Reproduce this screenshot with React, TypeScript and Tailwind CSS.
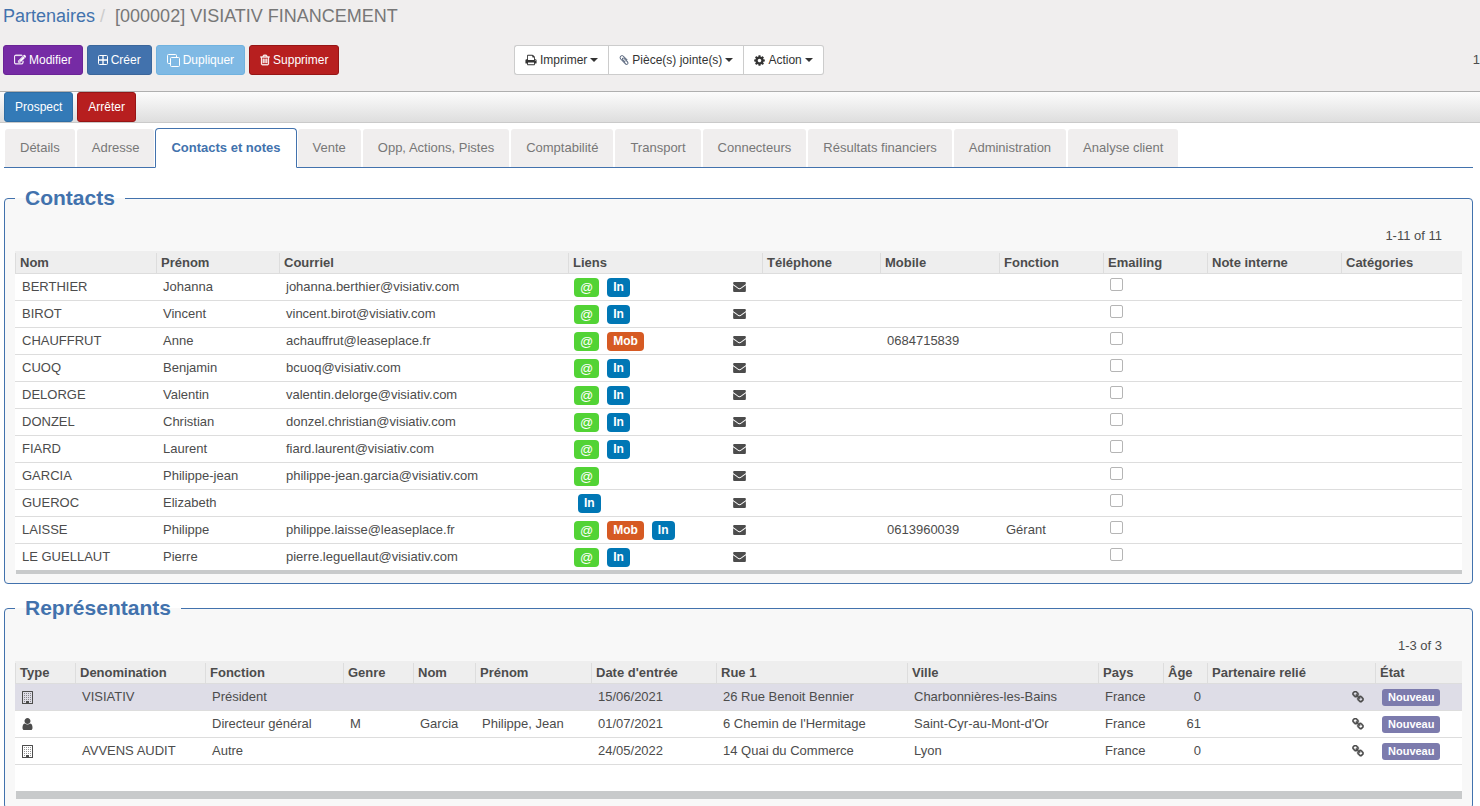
import { useState } from 'react';
import type { ReactNode } from 'react';

interface Contact {
  nom: string;
  prenom: string;
  courriel?: string;
  liens: string[];
  mobile?: string;
  fonction?: string;
}

interface Representant {
  societe: boolean;
  denomination?: string;
  fonction: string;
  genre?: string;
  nom?: string;
  prenom?: string;
  date: string;
  rue: string;
  ville: string;
  pays: string;
  age: number;
}

interface Column {
  label: string;
  width: number;
}

const tabs = [
  'Détails', 'Adresse', 'Contacts et notes', 'Vente', 'Opp, Actions, Pistes', 'Comptabilité',
  'Transport', 'Connecteurs', 'Résultats financiers', 'Administration', 'Analyse client',
];

const contactColumns: Column[] = [
  { label: 'Nom', width: 141 },
  { label: 'Prénom', width: 123 },
  { label: 'Courriel', width: 289 },
  { label: 'Liens', width: 194 },
  { label: 'Téléphone', width: 118 },
  { label: 'Mobile', width: 119 },
  { label: 'Fonction', width: 104 },
  { label: 'Emailing', width: 104 },
  { label: 'Note interne', width: 134 },
  { label: 'Catégories', width: 121 },
];

const contacts: Contact[] = [
  { nom: 'BERTHIER', prenom: 'Johanna', courriel: 'johanna.berthier@visiativ.com', liens: ['@', 'In'] },
  { nom: 'BIROT', prenom: 'Vincent', courriel: 'vincent.birot@visiativ.com', liens: ['@', 'In'] },
  { nom: 'CHAUFFRUT', prenom: 'Anne', courriel: 'achauffrut@leaseplace.fr', liens: ['@', 'Mob'], mobile: '0684715839' },
  { nom: 'CUOQ', prenom: 'Benjamin', courriel: 'bcuoq@visiativ.com', liens: ['@', 'In'] },
  { nom: 'DELORGE', prenom: 'Valentin', courriel: 'valentin.delorge@visiativ.com', liens: ['@', 'In'] },
  { nom: 'DONZEL', prenom: 'Christian', courriel: 'donzel.christian@visiativ.com', liens: ['@', 'In'] },
  { nom: 'FIARD', prenom: 'Laurent', courriel: 'fiard.laurent@visiativ.com', liens: ['@', 'In'] },
  { nom: 'GARCIA', prenom: 'Philippe-jean', courriel: 'philippe-jean.garcia@visiativ.com', liens: ['@'] },
  { nom: 'GUEROC', prenom: 'Elizabeth', liens: ['In'] },
  { nom: 'LAISSE', prenom: 'Philippe', courriel: 'philippe.laisse@leaseplace.fr', liens: ['@', 'Mob', 'In'], mobile: '0613960039', fonction: 'Gérant' },
  { nom: 'LE GUELLAUT', prenom: 'Pierre', courriel: 'pierre.leguellaut@visiativ.com', liens: ['@', 'In'] },
];

const representantColumns: Column[] = [
  { label: 'Type', width: 60 },
  { label: 'Denomination', width: 130 },
  { label: 'Fonction', width: 138 },
  { label: 'Genre', width: 70 },
  { label: 'Nom', width: 62 },
  { label: 'Prénom', width: 116 },
  { label: "Date d'entrée", width: 125 },
  { label: 'Rue 1', width: 191 },
  { label: 'Ville', width: 191 },
  { label: 'Pays', width: 65 },
  { label: 'Âge', width: 44 },
  { label: 'Partenaire relié', width: 168 },
  { label: 'État', width: 87 },
];

const representants: Representant[] = [
  { societe: true, denomination: 'VISIATIV', fonction: 'Président', date: '15/06/2021', rue: '26 Rue Benoit Bennier', ville: 'Charbonnières-les-Bains', pays: 'France', age: 0 },
  { societe: false, fonction: 'Directeur général', genre: 'M', nom: 'Garcia', prenom: 'Philippe, Jean', date: '01/07/2021', rue: "6 Chemin de l'Hermitage", ville: "Saint-Cyr-au-Mont-d'Or", pays: 'France', age: 61 },
  { societe: true, denomination: 'AVVENS AUDIT', fonction: 'Autre', date: '24/05/2022', rue: '14 Quai du Commerce', ville: 'Lyon', pays: 'France', age: 0 },
];

const icons = {
  edit: 'M888 1184l116-116-152-152-116 116v56h96v96h56zm440-720q-16-16-33 1l-350 350q-17 17-1 33t33-1l350-350q17-17 1-33zm80 594v190q0 119-84.500 203.500t-203.500 84.500h-832q-119 0-203.500-84.500t-84.500-203.500v-832q0-119 84.500-203.500t203.500-84.500h832q63 0 117 25 15 7 18 23 3 17-9 29l-49 49q-14 14-32 8-23-6-45-6h-832q-66 0-113 47t-47 113v832q0 66 47 113t113 47h832q66 0 113-47t47-113v-126q0-13 9-22l64-64q15-15 35-7t20 29zm-96-738l288 288-672 672h-288v-288zm444 132l-92 92-288-288 92-92q28-28 68-28t68 28l152 152q28 28 28 68t-28 68z',
  trash: 'M704 736v576q0 14-9 23t-23 9h-64q-14 0-23-9t-9-23v-576q0-14 9-23t23-9h64q14 0 23 9t9 23zm256 0v576q0 14-9 23t-23 9h-64q-14 0-23-9t-9-23v-576q0-14 9-23t23-9h64q14 0 23 9t9 23zm256 0v576q0 14-9 23t-23 9h-64q-14 0-23-9t-9-23v-576q0-14 9-23t23-9h64q14 0 23 9t9 23zm128 724v-948h-896v948q0 22 7 40.500t14.500 27 10.500 8.500h832q3 0 10.500-8.500t14.500-27 7-40.500zm-672-1076h448l-48-117q-7-9-17-11h-317q-10 2-17 11zm928 32v64q0 14-9 23t-23 9h-96v948q0 83-47 143.500t-113 60.500h-832q-66 0-113-58.500t-47-141.500v-952h-96q-14 0-23-9t-9-23v-64q0-14 9-23t23-9h309l70-167q15-37 54-63t79-26h320q40 0 79 26t54 63l70 167h309q14 0 23 9t9 23z',
  print: 'M448 1536h896v-256h-896v256zm0-640h896v-384h-160q-40 0-68-28t-28-68v-160h-640v640zm1152 64q0-26-19-45t-45-19-45 19-19 45 19 45 45 19 45-19 19-45zm128 0v416q0 13-9.500 22.500t-22.500 9.500h-224v160q0 40-28 68t-68 28h-960q-40 0-68-28t-28-68v-160h-224q-13 0-22.500-9.500t-9.500-22.500v-416q0-79 56.500-135.500t135.500-56.500h64v-544q0-40 28-68t68-28h672q40 0 88 20t76 48l152 152q28 28 48 76t20 88v256h64q79 0 135.500 56.500t56.500 135.500z',
  clip: 'M1596 1385q0 117-79 196t-196 79q-135 0-235-100l-777-776q-113-115-113-271 0-159 110-270t269-111q158 0 273 113l605 606q10 10 10 22 0 16-30.500 46.500t-46.500 30.500q-13 0-23-10l-606-607q-79-77-181-77-106 0-179 75t-73 181q0 105 76 181l776 777q63 63 145 63 64 0 106-42t42-106q0-82-63-145l-581-581q-26-24-60-24-29 0-48 19t-19 48q0 32 25 59l410 410q10 10 10 22 0 16-31 47t-47 31q-12 0-22-10l-410-410q-63-61-63-149 0-82 57-139t139-57q88 0 149 63l581 581q100 98 100 235z',
  cog: 'M1152 896q0-106-75-181t-181-75-181 75-75 181 75 181 181 75 181-75 75-181zm512-109v222q0 12-8 23t-20 13l-185 28q-19 54-39 91 35 50 107 138 10 12 10 25t-9 23q-27 37-99 108t-94 71q-12 0-26-9l-138-108q-44 23-91 38-16 136-29 186-7 28-36 28h-222q-14 0-24.500-8.500t-11.500-21.500l-28-184q-49-16-90-37l-141 107q-10 9-25 9-14 0-25-11-126-114-165-168-7-10-7-23 0-12 8-23 15-21 51-66.500t54-70.500q-27-50-41-99l-183-27q-13-2-21-12.500t-8-23.500v-222q0-12 8-23t19-13l186-28q14-46 39-92-40-57-107-138-10-12-10-24 0-10 9-23 26-36 98.500-107.500t94.500-71.500q13 0 26 10l138 107q44-23 91-38 16-136 29-186 7-28 36-28h222q14 0 24.500 8.500t11.500 21.500l28 184q49 16 90 37l142-107q9-9 24-9 13 0 25 10 129 119 165 170 7 8 7 22 0 12-8 23-15 21-51 66.500t-54 70.500q26 50 41 98l183 28q13 2 21 12.500t8 23.500z',
  envelope: 'M1792 710v794q0 66-47 113t-113 47h-1472q-66 0-113-47t-47-113v-794q44 49 101 87 362 246 497 345 57 42 92.500 65.500t94.500 48 110 24.500h2q51 0 110-24.500t94.500-48 92.500-65.500q170-123 498-345 57-39 100-87zm0-294q0 79-49 151t-122 123q-376 261-468 325-10 7-42.500 31t-54 38.500-52 32.500-57.500 27-50 9h-2q-23 0-50-9t-57.500-27-52-32.500-54-38.500-42.500-31q-91-64-262-182.500t-205-142.500q-62-42-117-115.500t-55-136.500q0-78 41.500-130t118.500-52h1472q65 0 112.500 47t47.500 113z',
  user: 'M1536 1399q0 109-62.500 187t-150.500 78h-854q-88 0-150.500-78t-62.500-187q0-85 8.500-160.500t31.500-152 58.500-131 94-89 134.500-34.500q131 128 313 128t313-128q76 0 134.500 34.500t94 89 58.500 131 31.500 152 8.500 160.500zm-256-887q0 159-112.500 271.500t-271.500 112.500-271.500-112.500-112.500-271.500 112.500-271.500 271.500-112.500 271.500 112.500 112.500 271.500z',
  link: 'M1520 1216q0-40-28-68l-208-208q-28-28-68-28-42 0-72 32 3 3 19 18.500t21.500 21.500 15 19 13 25.500 3.500 27.500q0 40-28 68t-68 28q-15 0-27.500-3.500t-25.500-13-19-15-21.500-21.500-18.500-19q-33 31-33 73 0 40 28 68l206 207q27 27 68 27 40 0 68-26l147-146q28-28 28-67zm-703-705q0-40-28-68l-206-207q-28-28-68-28-39 0-68 27l-147 146q-28 28-28 67 0 40 28 68l208 208q27 27 68 27 42 0 72-31-3-3-19-18.500t-21.500-21.500-15-19-13-25.500-3.500-27.500q0-40 28-68t68-28q15 0 27.500 3.500t25.500 13 19 15 21.500 21.500 18.500 19q33-31 33-73zm895 705q0 120-85 203l-147 146q-83 83-203 83-121 0-204-85l-206-207q-83-83-83-203 0-123 88-209l-88-88q-86 88-208 88-120 0-204-84l-208-208q-84-84-84-204t85-203l147-146q83-83 203-83 121 0 204 85l206 207q83 83 83 203 0 123-88 209l88 88q86-88 208-88 120 0 204 84l208 208q84 84 84 204z',
};

interface IconProps {
  name: keyof typeof icons;
  className: string;
  box?: string;
  stroke?: number;
}

function Icon({ name, className, box = '0 0 1792 1792', stroke = 0 }: IconProps) {
  return (
    <svg viewBox={box} className={className} fill="currentColor" stroke="currentColor" strokeWidth={stroke} aria-hidden="true">
      <path d={icons[name]} />
    </svg>
  );
}

function PlusSquareIcon() {
  return (
    <svg viewBox="0 0 10 10" className="size-[10px]" fill="none" stroke="currentColor" aria-hidden="true">
      <rect x="0.5" y="0.5" width="9" height="9" rx="1" />
      <path d="M5 1v8M1 5h8" strokeWidth="1.3" />
    </svg>
  );
}

function CloneIcon() {
  return (
    <svg viewBox="0 0 13 13" className="size-[13px]" fill="none" stroke="currentColor" aria-hidden="true">
      <rect x="3.5" y="3.5" width="9" height="9" rx="1" />
      <path d="M3 9.500H1.500a1 1 0 0 1-1-1v-7a1 1 0 0 1 1-1h7a1 1 0 0 1 1 1V3" />
    </svg>
  );
}

function BuildingIcon() {
  return (
    <svg viewBox="0 0 11 13" className="h-[13px] w-[11px]" fill="currentColor" aria-hidden="true">
      <path fillRule="evenodd" d="M0.500 0h10q.5 0 .5.500v12q0 .5-.5.500h-10q-.5 0-.5-.500v-12q0-.5.500-.500zM1 1v11h3v-2h3v2h3V1z" />
      {[2, 4, 6, 8].map(y => [2, 4, 6, 8].map(x => (
        <rect key={`${x}-${y}`} x={x} y={y} width="1" height="1" opacity="0.6" />
      )))}
      <path d="M2 10h1v1H2zM8 10h1v1H8z" opacity="0.6" />
    </svg>
  );
}

function Caret() {
  return <span className="border-x-4 border-t-4 border-x-transparent border-t-current" />;
}

function Button({ className, children }: { className: string; children: ReactNode }) {
  return (
    <button type="button" className={`flex h-[30px] items-center gap-[3px] rounded-[3px] border px-[10px] text-xs text-white ${className}`}>
      {children}
    </button>
  );
}

function LinkBadge({ label }: { label: string }) {
  if (label === '@') {
    return <a href="#" className="mr-1 rounded bg-[#52d335] px-[6px] text-[13px] leading-[19px] text-white">@</a>;
  }
  return (
    <a href="#" className={`mx-1 rounded px-[6px] text-xs leading-[19px] font-bold text-white ${label === 'In' ? 'bg-[#0077b5]' : 'bg-[#d65a23]'}`}>
      {label}
    </a>
  );
}

function ListTable({ columns, barClass, children }: { columns: Column[]; barClass: string; children: ReactNode }) {
  return (
    <>
      <table className="w-full table-fixed border-separate border-spacing-0 bg-white">
        <colgroup>
          {columns.map(c => <col key={c.label} style={{ width: c.width }} />)}
        </colgroup>
        <thead>
          <tr className="h-[23px] bg-[#eee]">
            {columns.map(c => (
              <th key={c.label} className="border-b border-[#ddd] p-0 text-left font-bold whitespace-nowrap">
                <div className="mt-[2px] border-l border-[#ddd] pl-1 leading-5">{c.label}</div>
              </th>
            ))}
          </tr>
        </thead>
        <tbody>{children}</tbody>
      </table>
      <div className={`ml-px bg-[#c8cacb] ${barClass}`} />
    </>
  );
}

function Section({ title, pager, children }: { title: string; pager: string; children: ReactNode }) {
  return (
    <fieldset className="min-w-0 rounded border border-[#4272ad] bg-[#f8f8f8] px-[10px] pb-[9px]">
      <legend className="px-[10px] text-[21px] leading-[30px] font-bold text-[#4272ad]">{title}</legend>
      <div className="pt-[14px] pr-5 pb-[6px] text-right leading-[18px]">{pager}</div>
      {children}
    </fieldset>
  );
}

function App() {
  const [activeTab, setActiveTab] = useState('Contacts et notes');
  const [emailing, setEmailing] = useState<string[]>([]);

  const toggleEmailing = (nom: string) => {
    setEmailing(emailing.includes(nom) ? emailing.filter(n => n !== nom) : [...emailing, nom]);
  };

  return (
    <div className="h-screen overflow-hidden bg-white font-['Liberation_Sans',Arial,sans-serif] text-[13px] leading-[18px] text-[#4c4c4c]">
      <header className="border-b border-[#afafaf] bg-[#f0eeee] pt-[3px] pb-4 pl-[3px]">
        <h1 className="flex text-lg leading-[26px] text-[#777]">
          <a href="#" className="text-[#4272ad]">Partenaires</a>
          <span className="mr-[10px] ml-[5px] text-[#ccc]">/</span>
          <span>[000002] VISIATIV FINANCEMENT</span>
        </h1>

        <div className="mt-4 grid grid-cols-[511px_1fr_auto] items-center">
          <div className="flex gap-1">
            <Button className="border-[#6a2496] bg-[#762ba5]">
              <Icon name="edit" className="size-3" stroke={50} />Modifier
            </Button>
            <Button className="border-[#3b669b] bg-[#4272ad]">
              <PlusSquareIcon />Créer
            </Button>
            <Button className="border-[#70b2df] bg-[#7fb9e4]">
              <CloneIcon />Dupliquer
            </Button>
            <Button className="border-[#961515] bg-[#b71f1f]">
              <Icon name="trash" className="h-3 w-[10px]" box="150 0 1492 1792" stroke={50} />Supprimer
            </Button>
          </div>

          <div className="flex text-xs text-[#333]">
            <button type="button" className="flex h-[30px] items-center gap-[3px] rounded-l-[3px] border border-r-0 border-[#ccc] bg-white px-[10px]">
              <Icon name="print" className="size-3" />Imprimer<Caret />
            </button>
            <button type="button" className="flex h-[30px] items-center gap-[3px] border border-[#ccc] bg-white px-[10px]">
              <Icon name="clip" className="size-[10px] text-[#41506a]" box="140 100 1500 1600" />Pièce(s) jointe(s)<Caret />
            </button>
            <button type="button" className="flex h-[30px] items-center gap-[3px] rounded-r-[3px] border border-l-0 border-[#ccc] bg-white px-[10px]">
              <Icon name="cog" className="size-[11px]" box="100 100 1592 1592" />Action<Caret />
            </button>
          </div>

          <span>1</span>
        </div>
      </header>

      <div className="flex gap-1 border-b border-[#cacaca] bg-linear-to-b from-[#fcfcfc] to-[#dedede] pl-1">
        <Button className="border-[#2e6da4] bg-[#337ab7]">Prospect</Button>
        <Button className="border-[#961515] bg-[#b71f1f]">Arrêter</Button>
      </div>

      <main className="pt-[5px] pr-[7px] pl-1">
        <nav className="mb-[15px] flex border-b border-[#4272ad]">
          {tabs.map(tab => (
            <a
              key={tab}
              href="#"
              onClick={() => setActiveTab(tab)}
              className={tab === activeTab
                ? 'relative -mb-px rounded-t border border-[#4272ad] border-b-white bg-white px-[15px] py-[10px] font-bold whitespace-nowrap text-[#4272ad]'
                : '-mb-px rounded-t border border-transparent bg-[#f0eeee] bg-clip-padding px-[15px] py-[10px] whitespace-nowrap text-[#777]'}
            >
              {tab}
            </a>
          ))}
        </nav>

        <div className="space-y-[9px]">
          <Section title="Contacts" pager="1-11 of 11">
            <ListTable columns={contactColumns} barClass="h-1">
              {contacts.map(c => (
                <tr key={c.nom} className="h-[27px] whitespace-nowrap *:border-b *:border-[#ddd] *:p-0 *:pl-[7px] last:h-[26px] last:*:border-b-0">
                  <td>{c.nom}</td>
                  <td>{c.prenom}</td>
                  <td>{c.courriel}</td>
                  <td>
                    <div className="-ml-px flex items-center">
                      {c.liens.map(l => <LinkBadge key={l} label={l} />)}
                      <button type="button" aria-label="Envoyer un courriel" className="mr-4 ml-auto">
                        <Icon name="envelope" className="h-[10px] w-[13px]" box="0 256 1792 1408" />
                      </button>
                    </div>
                  </td>
                  <td></td>
                  <td>{c.mobile}</td>
                  <td>{c.fonction}</td>
                  <td className="align-top">
                    <input
                      type="checkbox"
                      aria-label={`Emailing ${c.nom}`}
                      checked={emailing.includes(c.nom)}
                      onChange={() => toggleEmailing(c.nom)}
                      className="mt-1 block size-[13px] appearance-none rounded-xs border border-[#b5b5b5] bg-white checked:bg-[#4272ad]"
                    />
                  </td>
                  <td></td>
                  <td></td>
                </tr>
              ))}
            </ListTable>
          </Section>

          <Section title="Représentants" pager="1-3 of 3">
            <ListTable columns={representantColumns} barClass="h-2">
              {representants.map(r => (
                <tr key={r.date} className="h-[27px] whitespace-nowrap first:bg-[#dedde7] *:border-b *:border-[#ddd] *:p-0 *:pl-[7px]">
                  <td>{r.societe ? <BuildingIcon /> : <Icon name="user" className="h-3 w-[11px]" box="256 128 1280 1536" />}</td>
                  <td>{r.denomination}</td>
                  <td>{r.fonction}</td>
                  <td>{r.genre}</td>
                  <td>{r.nom}</td>
                  <td>{r.prenom}</td>
                  <td>{r.date}</td>
                  <td>{r.rue}</td>
                  <td>{r.ville}</td>
                  <td>{r.pays}</td>
                  <td><div className="pr-[6px] text-right">{r.age}</div></td>
                  <td>
                    <button type="button" aria-label="Partenaire relié" className="mr-[11px] ml-auto block">
                      <Icon name="link" className="size-3" box="50 50 1692 1692" stroke={70} />
                    </button>
                  </td>
                  <td>
                    <span className="mt-px block w-fit rounded-[3px] bg-[#7c7bad] px-[6px] text-[11px] leading-[17px] font-bold text-white">Nouveau</span>
                  </td>
                </tr>
              ))}
              <tr className="h-[26px]"><td colSpan={representantColumns.length}></td></tr>
            </ListTable>
          </Section>
        </div>
      </main>
    </div>
  );
}

export default App;
